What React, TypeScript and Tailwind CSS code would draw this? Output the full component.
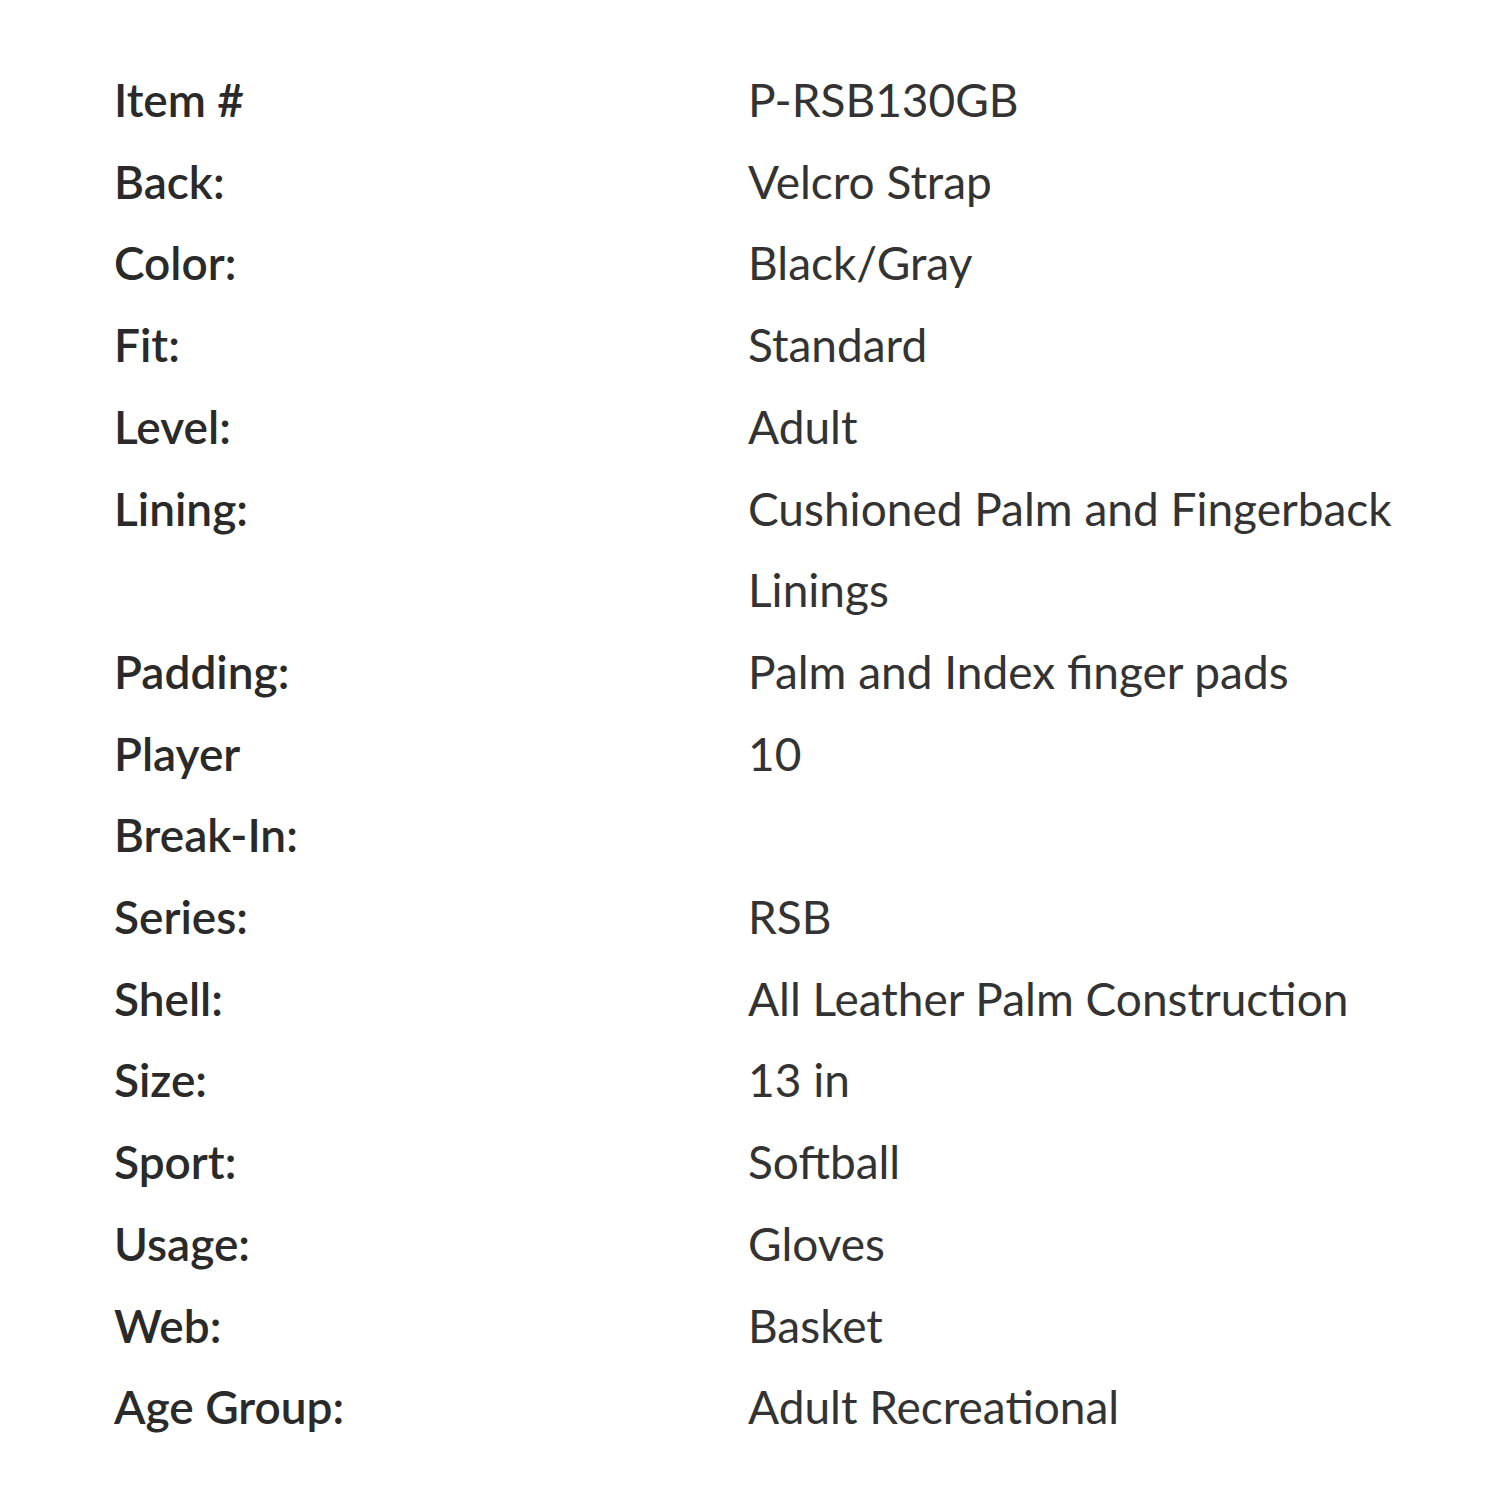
import React from "react";

const rows: [React.ReactNode, string][] = [
  ["Item #", "P-RSB130GB"],
  ["Back:", "Velcro Strap"],
  ["Color:", "Black/Gray"],
  ["Fit:", "Standard"],
  ["Level:", "Adult"],
  ["Lining:", "Cushioned Palm and Fingerback Linings"],
  ["Padding:", "Palm and Index finger pads"],
  [
    <>
      Player <span className="whitespace-nowrap">Break-In:</span>
    </>,
    "10",
  ],
  ["Series:", "RSB"],
  ["Shell:", "All Leather Palm Construction"],
  ["Size:", "13 in"],
  ["Sport:", "Softball"],
  ["Usage:", "Gloves"],
  ["Web:", "Basket"],
  ["Age Group:", "Adult Recreational"],
];

export default function App() {
  return (
    <div
      className="w-[1512px] h-[1512px] bg-white pt-[59px] pl-[114px]"
      style={{ fontFamily: "Lato, 'Open Sans', sans-serif" }}
    >
      <div className="grid grid-cols-[634px_680px] text-[46px] leading-[81.7px]">
        {rows.map(([k, v], i) => (
          <React.Fragment key={i}>
            <div className="font-semibold text-[#2a2a2a] max-w-[320px]">{k}</div>
            <div className="text-[#333333] pr-[20px]">{v}</div>
          </React.Fragment>
        ))}
      </div>
    </div>
  );
}
